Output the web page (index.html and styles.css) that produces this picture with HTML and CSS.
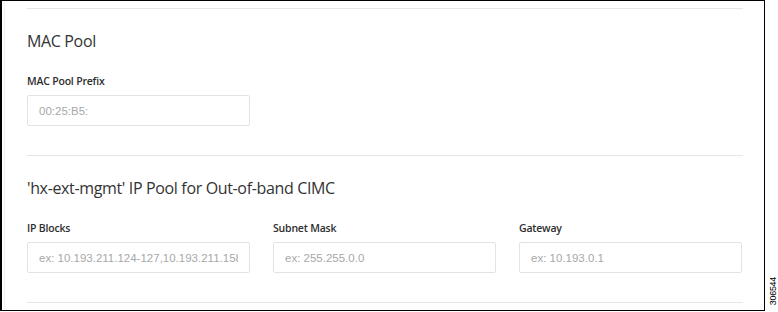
FILE: index.html
```html
<!DOCTYPE html>
<html lang="en">
<head>
    <meta charset="UTF-8">
    <title>Cluster Configuration - MAC Pool</title>
    <link rel="stylesheet" href="styles.css">
</head>
<body>
    <div class="figure">
        <div class="frame">
            <div class="panel">
                <div class="section">
                    <h2 class="section-title">MAC Pool</h2>
                    <div class="fields">
                        <div class="field">
                            <label class="label" for="macPrefix">MAC Pool Prefix</label>
                            <input id="macPrefix" class="input" type="text" placeholder="00:25:B5:">
                        </div>
                    </div>
                </div>

                <div class="section">
                    <h2 class="section-title">'hx-ext-mgmt' IP Pool for Out-of-band CIMC</h2>
                    <div class="fields">
                        <div class="field">
                            <label class="label" for="ipBlocks">IP Blocks</label>
                            <input id="ipBlocks" class="input" type="text" placeholder="ex: 10.193.211.124-127,10.193.211.158-163">
                        </div>
                        <div class="field">
                            <label class="label" for="subnetMask">Subnet Mask</label>
                            <input id="subnetMask" class="input" type="text" placeholder="ex: 255.255.0.0">
                        </div>
                        <div class="field">
                            <label class="label" for="gateway">Gateway</label>
                            <input id="gateway" class="input" type="text" placeholder="ex: 10.193.0.1">
                        </div>
                    </div>
                </div>
            </div>
        </div>
        <div class="figure-id">306544</div>
    </div>
</body>
</html>
```

FILE: styles.css
```css
* {
    margin: 0;
    padding: 0;
    box-sizing: border-box;
}

body {
    font-family: "Open Sans", sans-serif;
    background: white;
    width: 778px;
    height: 312px;
    overflow: hidden;
}

.figure {
    display: flex;
    align-items: flex-end;
}

.frame {
    width: 765px;
    height: 311px;
    border: 1px solid #000;
    border-left-width: 2px;
    overflow: hidden;
    background: white;
}

.panel {
    height: 100%;
    margin-left: 2px;
    border-left: 1px solid #f0f0f0;
    padding: 7px 21px 0 22px;
}

.section {
    border-top: 1px solid #e6e6e6;
    padding: 22px 0 29px;
}

.section:last-child {
    border-bottom: 1px solid #e6e6e6;
}

.section-title {
    font-size: 16px;
    font-weight: 400;
    letter-spacing: -0.35px;
    color: #333;
    line-height: 20px;
    margin-bottom: 23px;
}

.fields {
    display: grid;
    grid-template-columns: repeat(3, 223px);
    column-gap: 23px;
}

.label {
    display: block;
    font-size: 10.5px;
    font-weight: 600;
    letter-spacing: -0.2px;
    color: #2e2e2e;
    line-height: 14px;
    margin-bottom: 7px;
}

.input {
    width: 100%;
    height: 31px;
    border: 1px solid #e3e3e3;
    border-radius: 2px;
    padding: 0 11px;
    font-family: "Liberation Sans", Arial, sans-serif;
    font-size: 11.5px;
    color: #333;
    background: white;
    outline: none;
}

.input::placeholder {
    color: #a8a8a8;
}

.figure-id {
    writing-mode: vertical-rl;
    transform: rotate(180deg);
    font-family: "Liberation Sans", Arial, sans-serif;
    font-size: 9px;
    color: #000;
    margin: 0 0 6px 3px;
    letter-spacing: -0.3px;
}
```
